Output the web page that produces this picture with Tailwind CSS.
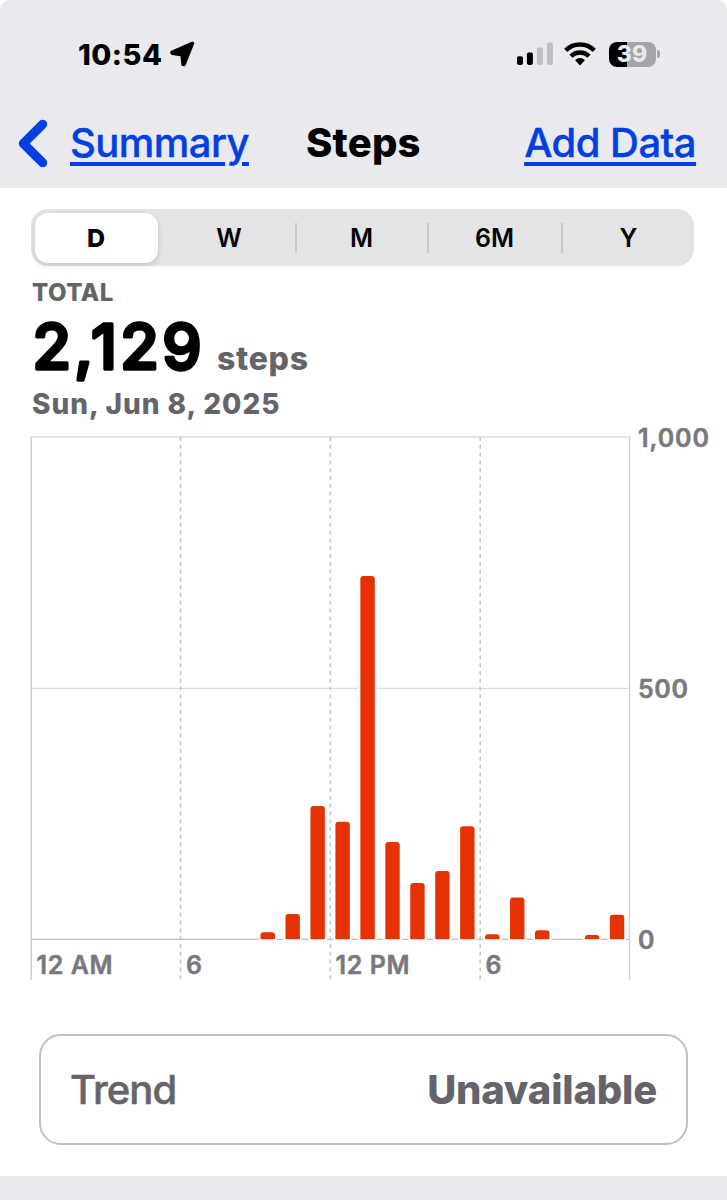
<!DOCTYPE html>
<html lang="en">
<head>
<meta charset="UTF-8">
<meta name="viewport" content="width=device-width, initial-scale=1.0">
<title>Steps</title>
<script src="https://cdn.jsdelivr.net/npm/@tailwindcss/browser@4"></script>
</head>
<body class="bg-white font-['Inter',sans-serif] text-black">

<div class="w-[727px] h-[1200px] flex flex-col overflow-hidden">

  <!-- Status bar + navigation -->
  <header class="h-[188px] shrink-0 bg-[#eae9ee] rounded-t-[10px] flex flex-col">
    <div class="h-[108px] pl-[78px] pr-[67px] flex items-center justify-between">
      <div class="flex items-center gap-[6px]">
        <span class="w-[86px] text-[29px] font-extrabold leading-none tracking-[0.5px] whitespace-nowrap">10:54</span>
        <svg width="25" height="26" viewBox="0 0 25 26" fill="#000" stroke="#000" stroke-width="3.4" stroke-linejoin="round"><path d="M22.5 2.4 L1.9 11.4 L2.4 12.4 L12 13.8 L13 23.4 L14 23.6 Z"/></svg>
      </div>
      <div class="flex items-center">
        <svg width="37" height="24" viewBox="0 0 37 24">
          <rect x="0" y="14.3" width="6" height="8.6" rx="1.8"/>
          <rect x="9.9" y="10.4" width="6" height="12.5" rx="1.8"/>
          <rect x="19.9" y="5.6" width="6" height="17.3" rx="1.8" fill="#bfbec3"/>
          <rect x="29.9" y="0.6" width="6" height="22.3" rx="1.8" fill="#bfbec3"/>
        </svg>
        <svg class="ml-[10px]" width="32" height="24" viewBox="0 0 32 24" fill="none" stroke="#000" stroke-width="4.4">
          <path d="M1.7 8.4 A20.4 20.4 0 0 1 30.3 8.4"/>
          <path d="M7 14.2 A12.8 12.8 0 0 1 25 14.2"/>
          <path d="M11.1 18.2 A6.8 6.8 0 0 1 20.9 18.2 L16 23.4 Z" fill="#000" stroke="none"/>
        </svg>
        <div class="ml-[13px] w-[47px] h-[25px] rounded-[8px] bg-[linear-gradient(to_right,#000_39%,#a5a4a9_39%)] flex items-center justify-center text-[23px] font-extrabold leading-none text-[#eae9ee]">39</div>
        <div class="ml-[1.5px] w-[3px] h-[8px] rounded-r-full bg-[#a5a4a9]"></div>
      </div>
    </div>
    <nav class="h-[70px] pl-[18px] pr-[31px] flex items-center text-[40px] leading-none">
      <svg class="shrink-0" width="30" height="49" viewBox="0 0 30 49" fill="none" stroke="#0040e0" stroke-width="9" stroke-linecap="round" stroke-linejoin="round"><path d="M24.7 5.2 L5.3 24.5 L24.7 43.8"/></svg>
      <a class="ml-[22px] w-[179px] whitespace-nowrap font-medium tracking-[-0.55px] text-[#0040e0] underline decoration-[4px] underline-offset-[5px] [-webkit-text-stroke:0.4px_#0040e0]">Summary</a>
      <h1 class="ml-[57px] font-extrabold tracking-[0.2px]">Steps</h1>
      <a class="ml-auto whitespace-nowrap font-medium tracking-[-0.55px] text-[#0040e0] underline decoration-[4px] underline-offset-[5px] [-webkit-text-stroke:0.4px_#0040e0]">Add Data</a>
    </nav>
  </header>

  <main class="flex-1 flex flex-col">
    <!-- Range picker -->
    <div class="mt-[21px] ml-[31px] w-[663px] h-[57px] shrink-0 rounded-[17px] bg-[#e4e4e6] p-[3.5px] flex items-center text-[25px] font-semibold leading-none">
      <div class="w-[123px] h-full pt-px rounded-[13px] bg-white shadow-[0_2px_6px_rgba(0,0,0,0.14)] flex items-center justify-center font-extrabold">D</div>
      <div class="w-[137px] text-center pl-[6px] pt-[2px]">W</div>
      <div class="w-[2px] h-[30px] bg-[#c7c7c9]"></div>
      <div class="w-[130px] text-center pt-[2px]">M</div>
      <div class="w-[2px] h-[30px] bg-[#c7c7c9]"></div>
      <div class="w-[132px] text-center pt-[2px]">6M</div>
      <div class="w-[2px] h-[30px] bg-[#c7c7c9]"></div>
      <div class="flex-1 text-center pt-[2px] pl-[4px]">Y</div>
    </div>

    <!-- Total -->
    <section class="h-[154px] shrink-0 pl-[32px] pt-[13px] flex flex-col text-[#65646b] font-bold">
      <p class="h-[26px] pt-px text-[24px] leading-[26px] tracking-[0.5px] font-extrabold">TOTAL</p>
      <div class="h-[85px] flex">
        <svg width="290" height="85" viewBox="32 305 290 85" aria-label="2,129 steps">
          <text x="32.5" y="369" font-size="62.5" font-weight="500" fill="#000" stroke="#000" stroke-width="3.4" stroke-linejoin="round" textLength="169">2,129</text>
          <text x="217" y="370" font-size="32" font-weight="800" fill="#65646b" textLength="91">steps</text>
        </svg>
      </div>
      <p class="text-[28px] leading-[28px] tracking-[0.95px] font-extrabold">Sun, Jun 8, 2025</p>
    </section>

    <!-- Hourly chart: 24 slots between x=31 and x=629.5 -->
    <svg class="shrink-0" width="727" height="565" viewBox="0 420 727 565">
      <g fill="none" stroke="#dcdcdf" stroke-width="1.3">
        <path d="M31 437H629.5"/>
        <path d="M31 688.3H629.5"/>
        <path d="M31.2 437V980" stroke="#c9c9cc"/>
        <path d="M629.5 437V980" stroke="#d0d0d3"/>
        <path d="M31 939.3H629.5" stroke="#bdbdc0"/>
      </g>
      <path d="M180.5 437V980M330.3 437V980M480.2 437V980" fill="none" stroke="#c4c4c7" stroke-width="1.5" stroke-dasharray="4 3.8"/>
      <g id="bars" fill="#e63200"></g>
      <g fill="#79787f" font-size="25" font-weight="600" stroke="#79787f" stroke-width="0.5" stroke-linejoin="round">
        <text x="638" y="446.6" textLength="71">1,000</text>
        <text x="638" y="698" textLength="50">500</text>
        <text x="638" y="949">0</text>
        <text x="36.5" y="974" textLength="76">12 AM</text>
        <text x="186" y="974">6</text>
        <text x="335.5" y="974" textLength="74">12 PM</text>
        <text x="485.5" y="974">6</text>
      </g>
    </svg>

    <div class="mt-[49px] ml-[39px] w-[649px] h-[111px] shrink-0 rounded-[22px] border-2 border-[#bfbfc4] px-[29px] flex items-center justify-between text-[40px] leading-none text-[#65646b]">
      <span class="font-medium tracking-[-0.9px] [-webkit-text-stroke:0.5px_#65646b]">Trend</span>
      <span class="font-extrabold tracking-[-0.2px]">Unavailable</span>
    </div>
  </main>

  <footer class="h-[24px] shrink-0 bg-[#eae9ee]"></footer>
</div>

<script>
  // [hour, top edge of the bar]
  const bars = [
    [9, 932.3], [10, 914], [11, 806], [12, 821.7], [13, 576], [14, 842], [15, 883],
    [16, 871], [17, 826.3], [18, 934.2], [19, 897.4], [20, 930.2], [22, 935], [23, 914.8]
  ];
  const baseline = 939.3;
  const group = document.getElementById('bars');

  bars.forEach(([hour, top]) => {
    const x = 31 + hour * 24.95 + 5;
    const path = document.createElementNS('http://www.w3.org/2000/svg', 'path');
    // white gap where the bar crosses the grid lines
    const gap = document.createElementNS('http://www.w3.org/2000/svg', 'rect');
    gap.setAttribute('x', x - 2);
    gap.setAttribute('y', top);
    gap.setAttribute('width', 18.4);
    gap.setAttribute('height', baseline - top + 1);
    gap.setAttribute('fill', '#fff');
    path.setAttribute('d', `M${x} ${baseline}V${top + 3}q0 -3 3 -3h8.4q3 0 3 3V${baseline}Z`);
    group.append(gap, path);
  });
</script>
</body>
</html>
